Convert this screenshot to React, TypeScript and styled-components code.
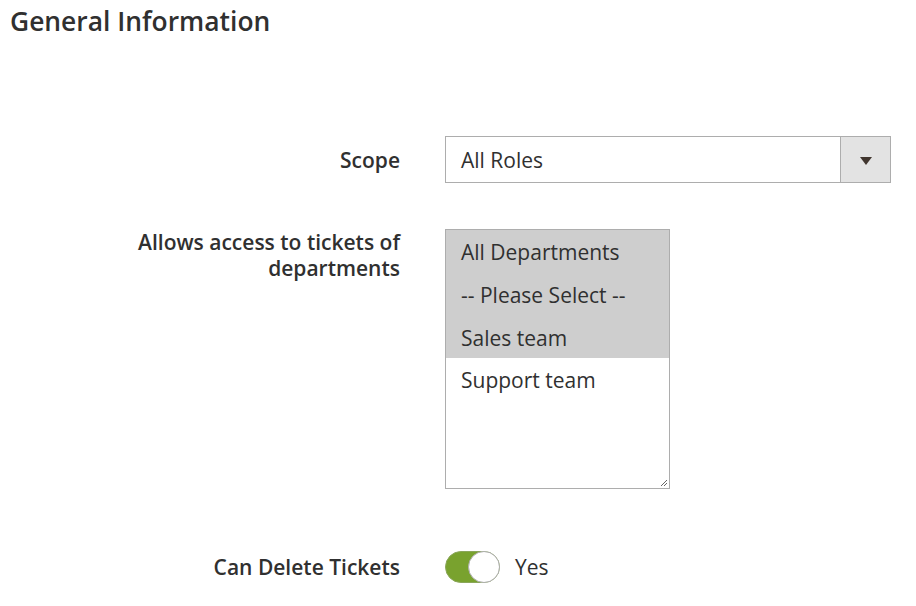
import React from "react";
import styled, { createGlobalStyle } from "styled-components";

const Global = createGlobalStyle`
  html, body { margin: 0; padding: 0; background: #ffffff; }
  body { font-family: "Open Sans", "Noto Sans", sans-serif; color: #303030; }
`;

const Page = styled.div`
  width: 916px;
  height: 606px;
  box-sizing: border-box;
  padding: 4px 0 0 10px;
`;

const Title = styled.h2`
  margin: 0;
  font-size: 26.4px;
  line-height: 34px;
  font-weight: 600;
  color: #303030;
`;

const Form = styled.div`
  display: flex;
  flex-direction: column;
  margin-top: 98px;
`;

const Row = styled.div<{ $mb: number; $align?: string }>`
  display: grid;
  grid-template-columns: 270px 446px;
  column-gap: 45px;
  padding-left: 120px;
  align-items: ${(p) => p.$align || "start"};
  margin-bottom: ${(p) => p.$mb}px;
`;

const Label = styled.div`
  text-align: right;
  font-size: 21px;
  line-height: 26px;
  font-weight: 600;
  color: #303030;
`;

const SelectBox = styled.div`
  display: flex;
  height: 47px;
  box-sizing: border-box;
  border: 1px solid #adadad;
  background: #fff;
`;

const SelectValue = styled.div`
  flex: 1;
  padding-left: 15px;
  padding-top: 1px;
  display: flex;
  align-items: center;
  font-size: 21px;
  color: #303030;
`;

const ArrowCell = styled.div`
  width: 49px;
  border-left: 1px solid #adadad;
  background: #e3e3e3;
  display: flex;
  align-items: center;
  justify-content: center;
`;

const Arrow = styled.span`
  width: 0;
  height: 0;
  border-left: 6px solid transparent;
  border-right: 6px solid transparent;
  border-top: 8px solid #41362f;
  margin-top: 2px;
`;

const MultiBox = styled.div`
  position: relative;
  width: 225px;
  height: 260px;
  box-sizing: border-box;
  border: 1px solid #adadad;
  background: #fff;
  display: flex;
  flex-direction: column;
`;

const Option = styled.div<{ $selected?: boolean }>`
  height: 42.7px;
  box-sizing: border-box;
  padding: 2px 15px 0;
  display: flex;
  align-items: center;
  font-size: 21px;
  color: #303030;
  white-space: nowrap;
  background: ${(p) => (p.$selected ? "#cecece" : "transparent")};
`;

const Grip = styled.svg`
  position: absolute;
  right: 1px;
  bottom: 1px;
`;

const ToggleWrap = styled.div`
  display: flex;
  align-items: center;
  gap: 15px;
`;

const Toggle = styled.div`
  position: relative;
  width: 55px;
  height: 32px;
  box-sizing: border-box;
  border-radius: 16px;
  background: #79a22e;
  border: 1px solid #8aa65a;
`;

const Knob = styled.div`
  position: absolute;
  right: -1px;
  top: -1px;
  width: 32px;
  height: 32px;
  box-sizing: border-box;
  border-radius: 50%;
  background: #fff;
  border: 1px solid #adadad;
`;

const ToggleText = styled.span`
  font-size: 21px;
  color: #303030;
`;

const departments = [
  { name: "All Departments", selected: true },
  { name: "-- Please Select --", selected: true },
  { name: "Sales team", selected: true },
  { name: "Support team", selected: false },
];

export default function App() {
  return (
    <Page>
      <Global />
      <Title>General Information</Title>
      <Form>
        <Row $mb={46} $align="center">
          <Label>Scope</Label>
          <SelectBox>
            <SelectValue>All Roles</SelectValue>
            <ArrowCell>
              <Arrow />
            </ArrowCell>
          </SelectBox>
        </Row>
        <Row $mb={62}>
          <Label>Allows access to tickets of departments</Label>
          <MultiBox>
            {departments.map((d) => (
              <Option key={d.name} $selected={d.selected}>
                {d.name}
              </Option>
            ))}
            <Grip width="10" height="10" viewBox="0 0 10 10">
              <path d="M9 3 L3 9 M9 6 L6 9" stroke="#666" strokeWidth="1" />
            </Grip>
          </MultiBox>
        </Row>
        <Row $mb={0} $align="center">
          <Label>Can Delete Tickets</Label>
          <ToggleWrap>
            <Toggle>
              <Knob />
            </Toggle>
            <ToggleText>Yes</ToggleText>
          </ToggleWrap>
        </Row>
      </Form>
    </Page>
  );
}
